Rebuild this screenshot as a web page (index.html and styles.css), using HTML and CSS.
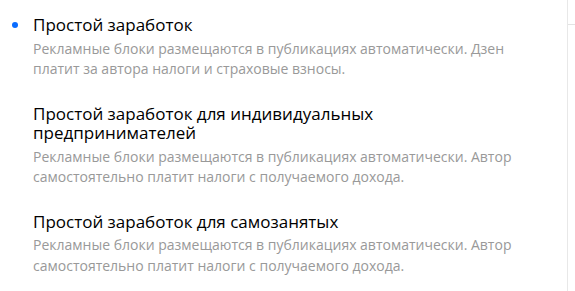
FILE: index.html
```html
<!DOCTYPE html>
<html lang="ru">
<head>
<meta charset="utf-8">
<link rel="stylesheet" href="styles.css">
</head>
<body>
<div class="page">
  <ul class="options">
    <li class="option option--active">
      <span class="marker"><span class="dot"></span></span>
      <div class="body">
        <div class="title">Простой заработок</div>
        <div class="desc">Рекламные блоки размещаются в публикациях автоматически. Дзен платит за автора налоги и страховые взносы.</div>
      </div>
    </li>
    <li class="option">
      <span class="marker"></span>
      <div class="body">
        <div class="title">Простой заработок для индивидуальных предпринимателей</div>
        <div class="desc">Рекламные блоки размещаются в публикациях автоматически. Автор самостоятельно платит налоги с получаемого дохода.</div>
      </div>
    </li>
    <li class="option">
      <span class="marker"></span>
      <div class="body">
        <div class="title">Простой заработок для самозанятых</div>
        <div class="desc">Рекламные блоки размещаются в публикациях автоматически. Автор самостоятельно платит налоги с получаемого дохода.</div>
      </div>
    </li>
  </ul>
  <div class="side"><div class="side-line"></div></div>
</div>
</body>
</html>
```

FILE: styles.css
```css
html, body {
  margin: 0;
  padding: 0;
  background: #fff;
}
body {
  font-family: "Open Sans", "Noto Sans", sans-serif;
  color: #000;
}
.page {
  display: flex;
  height: 291px;
}
.options {
  list-style: none;
  margin: 0;
  padding: 15px 0 0 0;
  border-right: 1px solid #e8e8e8;
  display: flex;
  flex-direction: column;
  gap: 24px;
  box-sizing: border-box;
  width: 568px;
}
.option {
  display: flex;
}
.marker {
  width: 33px;
  flex: none;
  height: 20px;
  display: flex;
  align-items: center;
  padding-left: 12px;
  box-sizing: border-box;
}
.dot {
  width: 6px;
  height: 6px;
  border-radius: 50%;
  background: #0a6cff;
}
.body {
  width: 495px;
}
.title {
  font-size: 17px;
  line-height: 19.5px;
  color: #000;
}
.desc {
  margin-top: 4px;
  font-size: 14px;
  line-height: 20.5px;
  color: #999;
}
.side {
  flex: 1;
  padding-top: 24px;
}
.side-line {
  height: 1px;
  background: #e3e3e3;
}
```
